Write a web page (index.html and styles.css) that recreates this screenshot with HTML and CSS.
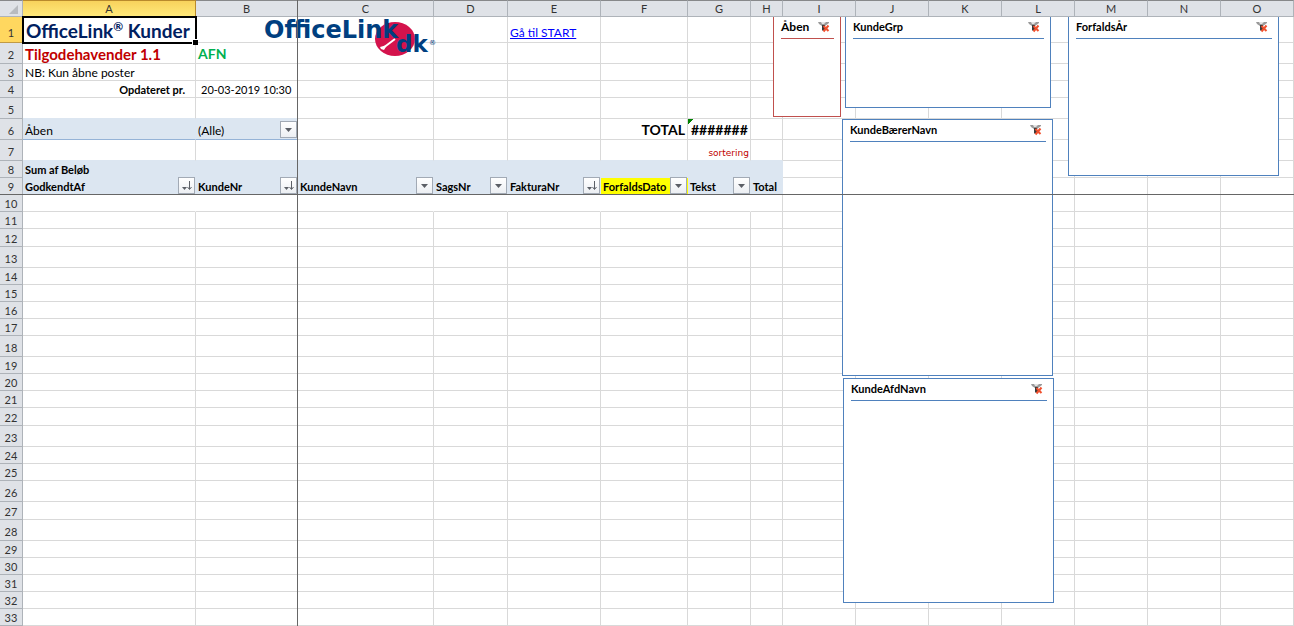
FILE: index.html
```html
<!DOCTYPE html>
<html lang="da">
<head>
<meta charset="utf-8">
<title>OfficeLink Kunder</title>
<link rel="stylesheet" href="styles.css">
</head>
<body>
<svg class="defs" aria-hidden="true">
  <symbol id="arrow" viewBox="0 0 15 15"><path d="M4 6h7L7.500 10z" fill="#5b5f66"/></symbol>
  <symbol id="sorted" viewBox="0 0 15 15"><path d="M3 9h5L5.500 12z" fill="#5b5f66"/><path d="M10.500 3v8M8.500 9l2 2.500 2-2.500" fill="none" stroke="#5b5f66"/></symbol>
  <symbol id="clear" viewBox="0 0 12 12"><path d="M0 1h11v1L7 5v5H4V5L1 3z" fill="#9a9a9a"/><path d="M3 1h5L6 3H4z" fill="#e4e4e4"/><path d="M4 4h3v5H4z" fill="#3a3a3a"/><path d="M5.500 5l5 5M10.500 4.500l-5 6" stroke="#f0502e" stroke-width="2"/></symbol>
</svg>
<main class="sheet">
  <table class="grid">
    <colgroup><col class="c-num"><col class="c-a"><col class="c-b"><col class="c-c"><col class="c-d"><col class="c-e"><col class="c-f"><col class="c-g"><col class="c-h"><col><col><col><col><col><col><col></colgroup>
    <thead>
      <tr><th class="corner"><svg viewBox="0 0 22 15"><path d="M18 4v9H9z" fill="#b8bbc0"/></svg></th><th class="active">A</th><th>B</th><th>C</th><th>D</th><th>E</th><th>F</th><th>G</th><th>H</th><th>I</th><th>J</th><th>K</th><th>L</th><th>M</th><th>N</th><th>O</th></tr>
    </thead>
    <tbody id="rows">
      <tr class="title-row"><th class="active">1</th><td class="selected"><span class="handle"></span>OfficeLink<sup>®</sup> Kunder</td><td></td><td></td><td></td><td><a href="#start">Gå til START</a></td><td></td><td></td><td></td><td></td><td></td><td></td><td></td><td></td><td></td><td></td></tr>
      <tr class="tall"><th>2</th><td class="heading red">Tilgodehavender 1.1</td><td class="large green">AFN</td><td></td><td></td><td></td><td></td><td></td><td></td><td></td><td></td><td></td><td></td><td></td><td></td><td></td></tr>
      <tr><th>3</th><td class="note">NB: Kun åbne poster</td><td></td><td></td><td></td><td></td><td></td><td></td><td></td><td></td><td></td><td></td><td></td><td></td><td></td><td></td></tr>
      <tr><th>4</th><td class="updated">Opdateret pr.</td><td class="stamp">20-03-2019 10:30</td><td></td><td></td><td></td><td></td><td></td><td></td><td></td><td></td><td></td><td></td><td></td><td></td><td></td></tr>
      <tr class="tall"><th>5</th><td class="above"></td><td class="above"></td><td></td><td></td><td></td><td></td><td></td><td></td><td></td><td></td><td></td><td></td><td></td><td></td><td></td></tr>
      <tr class="tall"><th>6</th><td class="page note">Åben</td><td class="page note"><div class="field"><span>(Alle)</span><button aria-label="Filtrer Åben"><svg><use href="#arrow"/></svg></button></div></td><td></td><td></td><td></td><td class="total">TOTAL</td><td class="total sum">#######</td><td></td><td></td><td></td><td></td><td></td><td></td><td></td><td></td></tr>
      <tr class="tall"><th>7</th><td class="edge"></td><td class="edge"></td><td class="edge"></td><td class="edge"></td><td class="edge"></td><td class="edge"></td><td class="edge sorting">sortering</td><td class="edge"></td><td></td><td></td><td></td><td></td><td></td><td></td><td></td></tr>
      <tr><th>8</th><td class="pivot">Sum af Beløb</td><td class="pivot"></td><td class="pivot"></td><td class="pivot"></td><td class="pivot"></td><td class="pivot"></td><td class="pivot"></td><td class="pivot"></td><td></td><td></td><td></td><td></td><td></td><td></td><td></td></tr>
      <tr>
        <th>9</th>
        <td class="pivot"><div class="field"><span>GodkendtAf</span><button aria-label="Filtrer GodkendtAf"><svg><use href="#sorted"/></svg></button></div></td>
        <td class="pivot"><div class="field"><span>KundeNr</span><button aria-label="Filtrer KundeNr"><svg><use href="#sorted"/></svg></button></div></td>
        <td class="pivot"><div class="field"><span>KundeNavn</span><button aria-label="Filtrer KundeNavn"><svg><use href="#arrow"/></svg></button></div></td>
        <td class="pivot"><div class="field"><span>SagsNr</span><button aria-label="Filtrer SagsNr"><svg><use href="#arrow"/></svg></button></div></td>
        <td class="pivot"><div class="field"><span>FakturaNr</span><button aria-label="Filtrer FakturaNr"><svg><use href="#sorted"/></svg></button></div></td>
        <td class="pivot due"><div class="field"><span>ForfaldsDato</span><button aria-label="Filtrer ForfaldsDato"><svg><use href="#arrow"/></svg></button></div></td>
        <td class="pivot"><div class="field"><span>Tekst</span><button aria-label="Filtrer Tekst"><svg><use href="#arrow"/></svg></button></div></td>
        <td class="pivot">Total</td><td></td><td></td><td></td><td></td><td></td><td></td><td></td>
      </tr>
      <tr class="body-row"><th>10</th><td></td><td></td><td></td><td></td><td></td><td></td><td></td><td></td><td></td><td></td><td></td><td></td><td></td><td></td><td></td></tr>
    </tbody>
  </table>

  <svg class="logo" viewBox="0 0 172 40" role="img" aria-label="OfficeLink.dk">
    <ellipse cx="131" cy="22" rx="20" ry="17" fill="#d4134c"/>
    <path d="M131 22l-12 9" stroke="#fff" stroke-width="2"/>
    <path d="M116 30l7-2-3 5-3-1z" fill="#fff"/>
    <text class="logo-name" x="0" y="21">OfficeLink</text>
    <text class="logo-tld" x="132" y="35">dk</text>
    <text class="logo-mark" x="165" y="28">®</text>
  </svg>

  <section class="slicer docked s-open"><header><h2>Åben</h2><button aria-label="Ryd filter Åben"><svg><use href="#clear"/></svg></button></header></section>
  <section class="slicer docked s-group"><header><h2>KundeGrp</h2><button aria-label="Ryd filter KundeGrp"><svg><use href="#clear"/></svg></button></header></section>
  <section class="slicer s-bearer"><header><h2>KundeBærerNavn</h2><button aria-label="Ryd filter KundeBærerNavn"><svg><use href="#clear"/></svg></button></header></section>
  <section class="slicer s-dept"><header><h2>KundeAfdNavn</h2><button aria-label="Ryd filter KundeAfdNavn"><svg><use href="#clear"/></svg></button></header></section>
  <section class="slicer docked s-year"><header><h2>ForfaldsÅr</h2><button aria-label="Ryd filter ForfaldsÅr"><svg><use href="#clear"/></svg></button></header></section>

  <div class="freeze-v"></div>
  <div class="freeze-h"></div>
</main>
<script src="script.js"></script>
</body>
</html>
```

FILE: styles.css
```css
* { box-sizing: border-box; }
body {
  margin: 0;
  background: #fff;
  color: #000;
  font-family: Lato, "Open Sans", sans-serif;
  font-size: 11px;
  line-height: 15px;
}
.defs { position: absolute; width: 0; height: 0; }
.sheet { position: relative; overflow: hidden; }

.grid {
  width: 100%;
  table-layout: fixed;
  border-collapse: separate;
  border-spacing: 0;
}
.c-num { width: 23px; }
.c-a { width: 173px; }
.c-b { width: 102px; }
.c-c { width: 136px; }
.c-d { width: 74px; }
.c-e { width: 93px; }
.c-f { width: 87px; }
.c-g { width: 63px; }
.c-h { width: 32px; }
col { width: 73px; }

th, td {
  padding: 0;
  height: 17px;
  border-right: 1px solid #d9d9d9;
  border-bottom: 1px solid #d9d9d9;
  vertical-align: bottom;
  white-space: nowrap;
}
td { padding: 0 2px; text-align: left; }
th {
  background: #dfe2e7;
  border-color: #aeb3b9;
  color: #333;
  font-weight: 400;
  text-align: center;
}
thead th { border-top: 1px solid #87888a; }
thead .active { background: linear-gradient(#f8d25c, #ffe97a); border-color: #b98a2c; }
tbody .active { background: #ffd75f; border-color: #c09a45; }
.corner svg { display: block; width: 22px; height: 15px; }
.tall > * { height: 21px; }
.tall > th { padding-bottom: 1px; }
.medium > * { height: 18px; }
.title-row > * { height: 26px; padding-bottom: 2px; }

a { color: #00f; font-size: 12px; }
.selected {
  position: relative;
  outline: 2px solid #000;
  outline-offset: -1px;
  border-color: #000;
  padding-left: 3px;
  padding-bottom: 0;
  color: #002060;
  font-size: 19px;
  font-weight: 700;
  line-height: 22px;
}
.selected sup { font-size: 12px; line-height: 0; }
.handle {
  position: absolute;
  right: -3px;
  bottom: -3px;
  width: 6px;
  height: 6px;
  background: #000;
  border: 1px solid #fff;
  border-width: 1px 0 0 1px;
}
.large { font-size: 14px; font-weight: 700; line-height: 18px; }
.heading { font-size: 15px; font-weight: 700; line-height: 18px; }
.note { font-size: 12px; }
.red { color: #c00000; }
.green { color: #00b050; }
.updated { padding-right: 10px; text-align: right; font-weight: 700; }
.stamp { padding-left: 5px; }
.above { border-bottom-color: #dce6f1; }
.edge { border-bottom-color: #dce6f1; }
.page { background: #dce6f1; border-right-color: #dce6f1; border-bottom-color: #95b3d7; }
.tall > .page { padding-bottom: 1px; }
.total { font-size: 14px; font-weight: 700; line-height: 18px; text-align: right; }
.sum { padding-left: 3px; text-align: left; background: linear-gradient(135deg, #008000 4px, transparent 4px); }
.sorting { padding-right: 1px; color: #c00000; font-family: "DejaVu Sans", sans-serif; font-size: 9px; line-height: 14px; text-align: right; }
.pivot { background: #dce6f1; border-color: #dce6f1; font-weight: 700; }
.due { background: #ff0; border-right-color: #ff0; }
.body-row td:nth-child(-n+9) { border-right-color: transparent; }
.body-row td:nth-child(9) { border-right-color: #d9d9d9; }

.field { display: flex; justify-content: space-between; align-items: flex-end; height: 16px; margin-right: -2px; }
.field button {
  flex: none;
  width: 17px;
  height: 17px;
  margin-top: -1px;
  padding: 0;
  border: 1px solid #a2aab5;
  background: linear-gradient(#fff, #eceff3);
}
.field svg { display: block; width: 15px; height: 15px; }

.logo { position: absolute; left: 264px; top: 17px; width: 172px; height: 40px; overflow: visible; }
.logo text { font-family: "DejaVu Sans", sans-serif; font-weight: 700; fill: #003f80; }
.logo .logo-name { font-size: 24px; }
.logo .logo-tld { font-size: 23px; }
.logo .logo-mark { font-size: 7px; font-weight: 400; }

.slicer {
  position: absolute;
  padding: 0 6px 0 7px;
  border: 1px solid #4f81bd;
  background: #fff;
}
.slicer header {
  display: flex;
  justify-content: space-between;
  align-items: center;
  height: 22px;
  padding: 0 4px 2px 0;
  border-bottom: 1px solid #4f81bd;
}
.slicer h2 { margin: 0; font-size: 11px; font-weight: 700; }
.slicer button { width: 12px; height: 12px; padding: 0; border: 0; background: none; }
.slicer svg { display: block; width: 12px; height: 12px; }
.docked { top: 17px; border-top: 0; }
.s-open { left: 773px; width: 68px; height: 100px; border-color: #c0504d; }
.s-open header { border-color: #c0504d; }
.s-open h2 { font-size: 12px; }
.s-group { left: 845px; width: 206px; height: 91px; }
.s-bearer { left: 842px; top: 119px; width: 211px; height: 257px; }
.s-dept { left: 843px; top: 378px; width: 211px; height: 225px; }
.s-year { left: 1068px; width: 211px; height: 159px; }

.freeze-v { position: absolute; left: 297px; top: 0; bottom: 0; width: 1px; background: #666; }
.freeze-h { position: absolute; left: 0; right: 0; top: 194px; height: 1px; background: #666; }
```

FILE: script.js
```javascript
// Row height classes for the rows below the pivot header.
const heights = { 12: "medium", 13: "tall", 18: "tall", 22: "medium", 23: "tall", 26: "tall", 27: "medium", 28: "tall" };
const body = document.getElementById("rows");
for (let n = 11; n <= 33; n++) {
  const row = body.insertRow();
  if (heights[n]) row.className = heights[n];
  const head = document.createElement("th");
  head.textContent = n;
  row.append(head);
  for (let c = 0; c < 15; c++) row.insertCell();
}
```
